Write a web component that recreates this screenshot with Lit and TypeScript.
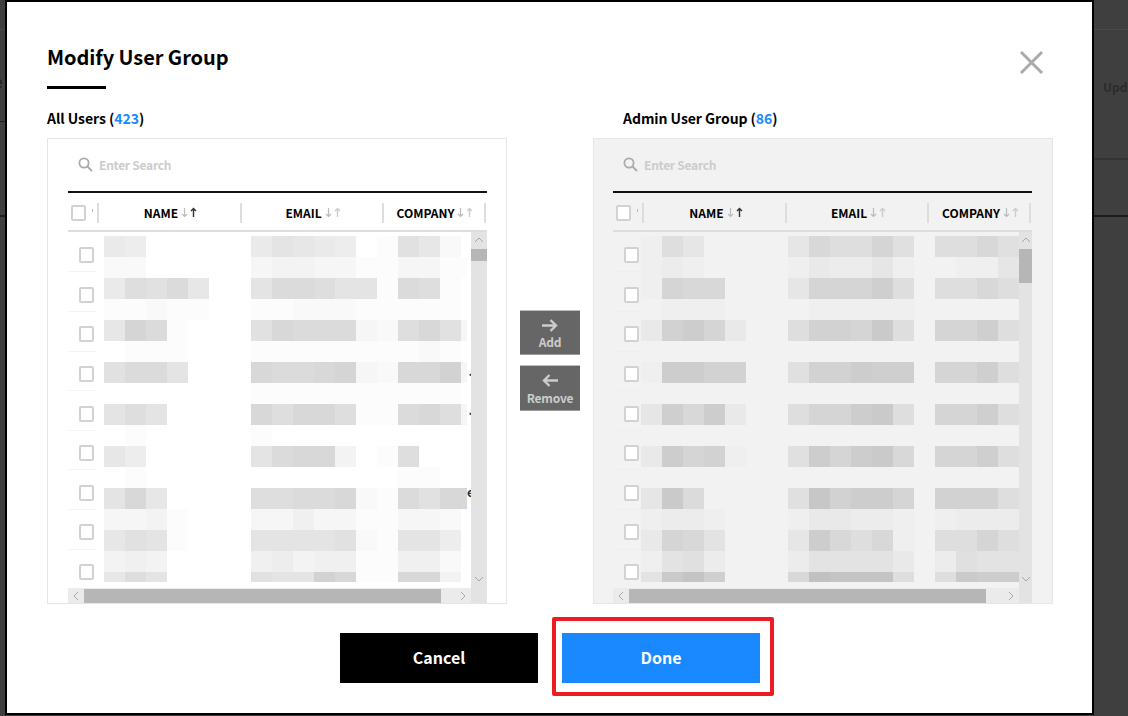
import { LitElement, html, css, svg } from "lit";
import { customElement } from "lit/decorators.js";

const LEFT = [
  "7600000798760 1a820", "2200000344331 13311", "7bac800 9ccb991 cb10", "1121100 1122211 1110",
  "8ec1000 adccc32 bda3", "0111000 1111111 1210", "acc9000 dccde32 ddf3", "0000000 1111111 1110",
  "9b90000 dbddb11 cdb3", "0100000 1000000 0000", "8600000 9cdd401 b000", "0100000 0000000 1100",
  "9d80000 bbccd21 cadd", "3341000 3353311 3320", "8a91000 9999a21 9960", "4540000 5645511 5520",
  "8b90000 a99fd11 dd40",
];
const RIGHT = [
  "1740000 4977a60 7796", "1210000 1322410 0114", "1a99000 4aaac70 7797", "0111000 0111110 0000",
  "3bda300 7bbae70 aac7", "0000000 0000000 0000", "1ddbb00 6bbdcc0 aac7", "0000000 0000000 0000",
  "4c9d300 7aade70 aac7", "0000000 0000000 0000", "3dab100 6dade90 aac7", "0000000 0000000 0000",
  "4e80000 6fbdda0 bbb7", "1221000 1332210 1222", "3a95000 4d97910 77a7", "1562000 2555530 2655",
  "5egc000 9hggg70 7edd",
];

const chevron = (d: string) => html`<svg class="chev" width="10" height="10" viewBox="0 0 10 10"><path d=${d} fill="none" stroke="#a8a8a8" stroke-width="1"/></svg>`;
const UP = "M1 7 L5 3 L9 7", DOWN = "M1 3 L5 7 L9 3", LT = "M7 1 L3 5 L7 9", RT = "M3 1 L7 5 L3 9";

const sortArrows = (active: boolean) => html`<svg class="sort" width="17" height="11" viewBox="0 0 17 11">
  <path d="M3.5 1 V9.5 M1 7 L3.5 9.5 L6 7" fill="none" stroke="#bbb" stroke-width="1.2"/>
  <path d="M12.5 10 V1.5 M10 4 L12.5 1.5 L15 4" fill="none" stroke=${active ? "#333" : "#ccc"} stroke-width="1.4"/>
</svg>`;

@customElement("user-panel")
export class UserPanel extends LitElement {
  static properties = { side: {} };
  side = "left";
  static styles = css`
    :host { display: block; width: 460px; height: 466px; }
    .panel { box-sizing: border-box; height: 466px; border: 1px solid #e6e6e6; padding: 0 0 0 20px; background: #fff; display: flex; flex-direction: column; }
    .panel.right { background: #f2f2f2; padding-left: 19px; }
    .search { height: 52px; display: flex; align-items: center; gap: 6px; padding: 0 0 1px 10px; box-sizing: border-box; color: #ccc; font-size: 12px; letter-spacing: -0.25px; font-weight: 700; }
    .table { width: 419px; flex: 1; display: flex; flex-direction: column; min-height: 0; }
    .head { box-sizing: border-box; height: 41px; flex: none; border-top: 2px solid #111; border-bottom: 2px solid #ddd; padding-top: 2px; display: grid; grid-template-columns: 31px 143px 142px 102px; align-items: center; }
    .hc { box-sizing: border-box; height: 20px; border-right: 2px solid #ddd; padding-left: 3px; display: flex; align-items: center; justify-content: center; gap: 3px; font-size: 12px; font-weight: 700; color: #000; }
    .right .hc { padding-left: 4px; }
    .hc.first, .right .hc.first { justify-content: flex-start; padding-left: 3px; gap: 6px; }
    .tick { width: 1px; height: 3px; background: #bbb; margin-top: -5px; }
    .cb { box-sizing: border-box; width: 15px; height: 16px; border: 2px solid #d2d2d2; border-radius: 2px; background: #fff; flex: none; }
    .mid { height: 356px; flex: none; display: flex; }
    .body { position: relative; flex: 1; overflow: hidden; }
    .row { box-sizing: border-box; height: 39.6px; display: flex; }
    .cell { box-sizing: border-box; width: 28px; height: 100%; padding: 6px 0 0 11px; display: flex; align-items: center; border-bottom: 1px solid #f4f4f4; }
    .right .cell { border-bottom-color: #eee; }
    .row:first-child { margin-top: 0.9px; }
    .mosaic { position: absolute; top: 4px; height: 346px; display: grid; grid-template-columns: repeat(18, 21px); grid-auto-rows: 21px; overflow: hidden; }
    .speck { position: absolute; left: 399px; font-size: 12px; line-height: 12px; color: #333; font-weight: 700; }
    .vs { flex: none; background: #e3e3e3; position: relative; display: flex; flex-direction: column; align-items: center; justify-content: space-between; padding: 3px 0 4px; box-sizing: border-box; }
    .thumb { position: absolute; left: 0; right: 0; top: 17px; background: #b6b6b6; }
    .hs { flex: 1; display: flex; min-height: 0; background: #ebebeb; }
    .hb { width: 16px; display: flex; align-items: center; justify-content: center; flex: none; }
    .ht { width: 357px; background: #b6b6b6; margin-top: 1px; flex: none; }
    .htrest { flex: 1; display: flex; align-items: center; justify-content: flex-end; }
    .corner { background: #e3e3e3; flex: none; }
    .htrest .chev { margin-right: 3px; }
    .chev { display: block; flex: none; }
  `;
  render() {
    const right = this.side === "right";
    const data = right ? RIGHT : LEFT;
    const vw = right ? 13 : 16;
    const cells = data.flatMap((r) => r.replace(/ /g, "").split(""));
    const specks = right ? [] : [[136, "·"], [175, "··"], [254, "e"]];
    return html`<div class="panel ${right ? "right" : ""}">
      <div class="search">
        <svg width="15" height="15" viewBox="0 0 15 15"><circle cx="6" cy="6" r="4.6" fill="none" stroke="#aaa" stroke-width="1.8"/><path d="M9.5 9.5 L14 14" stroke="#aaa" stroke-width="2"/></svg>
        <span>Enter Search</span>
      </div>
      <div class="table">
        <div class="head">
          <div class="hc first"><div class="cb"></div><div class="tick"></div></div>
          <div class="hc">NAME ${sortArrows(true)}</div>
          <div class="hc">EMAIL ${sortArrows(false)}</div>
          <div class="hc">COMPANY ${sortArrows(false)}</div>
        </div>
        <div class="mid">
          <div class="body">
            ${Array.from({ length: 9 }, () => html`<div class="row"><div class="cell"><div class="cb"></div></div></div>`)}
            <div class="mosaic" style="left:${right ? 28 : 36}px;width:${right ? 378 : 363}px">
              ${cells.map((c) => html`<div style="background:rgba(0,0,0,${(parseInt(c, 36) * 3) / 255})"></div>`)}
            </div>
            ${specks.map(([t, s]) => html`<span class="speck" style="top:${t}px">${s}</span>`)}
          </div>
          <div class="vs" style="width:${vw}px">
            ${chevron(UP)}
            <div class="thumb" style="height:${right ? 34 : 12}px"></div>
            ${chevron(DOWN)}
          </div>
        </div>
        <div class="hs">
          <div class="hb">${chevron(LT)}</div>
          <div class="ht"></div>
          <div class="htrest">${chevron(RT)}</div>
          <div class="corner" style="width:${vw}px"></div>
        </div>
      </div>
    </div>`;
  }
}

@customElement("app-root")
export class AppRoot extends LitElement {
  static styles = css`
    :host { display: block; position: relative; width: 1128px; height: 716px; overflow: hidden; background: #3f3f3f; font-family: "Noto Sans CJK KR", "Noto Sans", sans-serif; }
    .bd { position: absolute; inset: 0; display: flex; justify-content: space-between; }
    .bdl { width: 7px; overflow: hidden; display: flex; flex-direction: column; }
    .bdr { width: 34px; overflow: hidden; display: flex; flex-direction: column; }
    .b1 { box-sizing: border-box; flex: none; border-bottom: 1px solid #4a4a4a; height: 30px; }
    .b2 { box-sizing: border-box; flex: none; height: 31px; border-bottom: 1px solid #1c1c1c; }
    .b3 { box-sizing: border-box; flex: none; height: 95px; border-bottom: 2px solid #1c1c1c; }
    .b4 { box-sizing: border-box; flex: none; height: 130px; border-bottom: 2px solid #333; padding: 48px 0 0 9px; font-size: 12px; line-height: 18px; font-weight: 700; color: #2c2c2c; white-space: nowrap; }
    .b5 { box-sizing: border-box; flex: none; height: 57px; border-bottom: 2px solid #1c1c1c; }
    .e { display: block; margin: 43px 0 0 -6px; font-size: 15px; line-height: 18px; color: #222; font-weight: 700; }
    .wrap { position: relative; box-sizing: border-box; height: 716px; padding: 2px 36px 3px 7px; }
    .modal { box-sizing: border-box; height: 711px; background: #fff; box-shadow: 0 0 0 2px #000; padding: 0 39px 0 40px; display: flex; flex-direction: column; }
    .head { display: flex; justify-content: space-between; align-items: flex-start; padding: 40px 9px 0 0; height: 87px; box-sizing: border-box; flex: none; }
    h1 { margin: 0; font-size: 20px; letter-spacing: -0.06px; line-height: 30px; font-weight: 700; color: #000; }
    .bar { width: 59px; height: 3px; background: #000; margin-top: 14px; }
    .x { display: block; margin-top: 8px; }
    .cols { display: flex; margin-top: 19px; flex: none; }
    .col { width: 460px; flex: none; }
    .label { font-size: 14px; letter-spacing: -0.05px; line-height: 20px; font-weight: 700; color: #000; margin-bottom: 10px; white-space: nowrap; }
    .label.r { padding-left: 30px; }
    .label b { color: #1a88ff; font-weight: 700; }
    .center { flex: 1; display: flex; flex-direction: column; align-items: center; justify-content: center; gap: 10px; padding-top: 9px; }
    .mv { box-sizing: border-box; width: 60px; background: #666; color: #ccc; border-top: 1px solid #bdbdbd; border-bottom: 1px solid #999; font-size: 12px; letter-spacing: -0.2px; line-height: 16px; font-weight: 700; display: flex; flex-direction: column; align-items: center; padding-top: 8px; }
    .mv.a { height: 45px; }
    .mv.b { height: 46px; }
    .mv.b svg { margin-bottom: 3px; }
    .mv svg { display: block; margin-bottom: 2px; flex: none; }
    .foot { display: flex; justify-content: center; gap: 24px; margin-top: 29px; }
    .btn { position: relative; box-sizing: border-box; padding-bottom: 2px; width: 198px; height: 50px; display: flex; align-items: center; justify-content: center; color: #fff; font-size: 16px; font-weight: 700; background: #000; }
    .btn.done { background: #1a88ff; }
    .mark { position: absolute; left: -10px; right: -14px; top: -16px; bottom: -13px; box-sizing: border-box; border: 4px solid #ed1c24; border-radius: 2px; }
  `;
  render() {
    const arrow = (rev: boolean) => html`<svg width="16" height="13" viewBox="0 0 16 13" style=${rev ? "transform:scaleX(-1)" : ""}>${svg`<path d="M0 6.5 H14 M8.5 1 L14 6.5 L8.5 12" fill="none" stroke="#ccc" stroke-width="2.4"/>`}</svg>`;
    return html`
      <div class="bd">
        <div class="bdl"><div class="b1"></div><span class="e">e</span><div class="b2"></div><div class="b3"></div></div>
        <div class="bdr"><div class="b1"></div><div class="b4">Update</div><div class="b5"></div></div>
      </div>
      <div class="wrap">
        <div class="modal">
          <div class="head">
            <div><h1>Modify User Group</h1><div class="bar"></div></div>
            <svg class="x" width="25" height="25" viewBox="0 0 25 25"><path d="M2 2 L23 23 M23 2 L2 23" stroke="#aaa" stroke-width="3"/></svg>
          </div>
          <div class="cols">
            <div class="col">
              <div class="label">All Users (<b>423</b>)</div>
              <user-panel side="left"></user-panel>
            </div>
            <div class="center">
              <div class="mv a">${arrow(false)}Add</div>
              <div class="mv b">${arrow(true)}Remove</div>
            </div>
            <div class="col">
              <div class="label r">Admin User Group (<b>86</b>)</div>
              <user-panel side="right"></user-panel>
            </div>
          </div>
          <div class="foot">
            <div class="btn">Cancel</div>
            <div class="btn done">Done<div class="mark"></div></div>
          </div>
        </div>
      </div>`;
  }
}
